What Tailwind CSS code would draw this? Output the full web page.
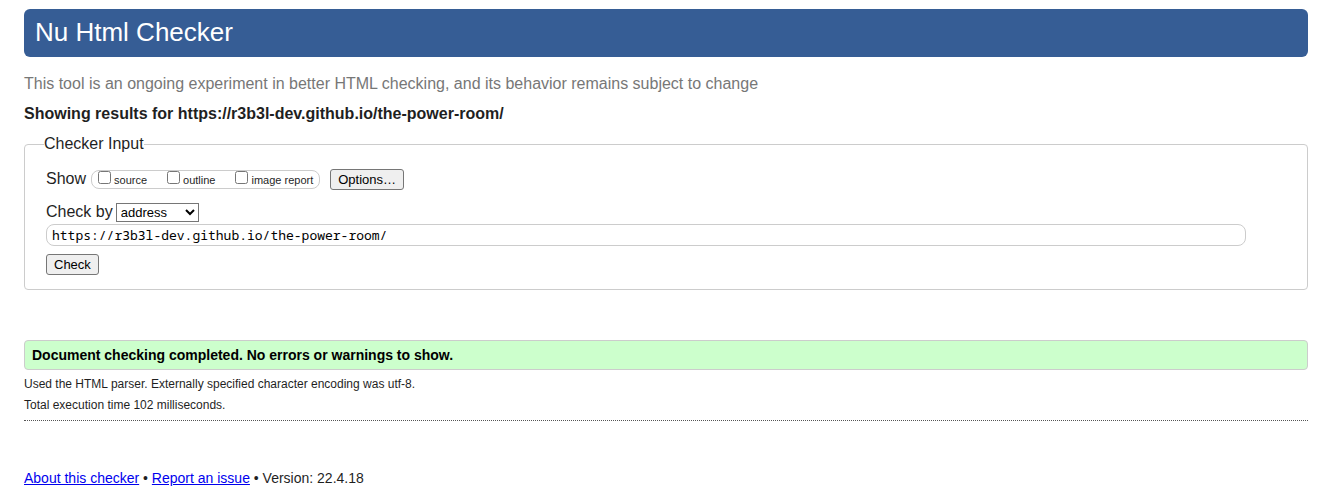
<!DOCTYPE html>
<html lang="en">
<head>
<meta charset="utf-8">
<meta name="viewport" content="width=device-width, initial-scale=1">
<title>Nu Html Checker</title>
<script src="https://cdn.jsdelivr.net/npm/@tailwindcss/browser@4"></script>
</head>
<body class="bg-white px-5 pt-[9px] pb-3 pl-6 font-['Liberation_Sans',Arial,sans-serif] text-base leading-5 text-[#1f1f1f]">
<header>
  <h1 class="rounded-md bg-[#365d95] px-[11px] pt-[5px] pb-[7px] text-[26px] leading-9 text-white">Nu Html Checker</h1>
</header>
<main>
  <p class="mt-[17px] text-[#777]">This tool is an ongoing experiment in better HTML checking, and its behavior remains subject to change</p>
  <h2 class="mt-2.5 font-bold">Showing results for https://r3b3l-dev.github.io/the-power-room/</h2>
  <form>
    <fieldset class="mt-2.5 rounded border border-[#ccc] px-[21px] pb-3.5">
      <legend class="-ml-0.5">Checker Input</legend>
      <div class="mt-[15px] flex h-[21px] items-center">
        <span class="pb-0.5">Show</span>
        <div class="ml-[5px] flex h-[19px] items-center rounded-lg border border-[#ccc] px-1.5 text-[11px] leading-4">
          <input id="source" type="checkbox" class="mb-1 size-[13px]"><label for="source" class="ml-[3px] pt-px">source</label>
          <input id="outline" type="checkbox" class="mb-1 ml-5 size-[13px]"><label for="outline" class="ml-[3px] pt-px">outline</label>
          <input id="image" type="checkbox" class="mb-1 ml-5 size-[13px]"><label for="image" class="ml-[3px] pt-px">image report</label>
        </div>
        <button type="button" class="ml-2.5 h-[21px] rounded-[3px] border border-[#767676] bg-[#efefef] px-[7px] text-[13px] leading-4 text-black">Options…</button>
      </div>
      <div class="mt-3 flex items-center">
        <label for="method">Check by</label>
        <select id="method" class="ml-[3px] h-[19px] w-[83px] border border-[#767676] bg-white text-[13px] leading-4 text-black"><option>address</option></select>
      </div>
      <input type="text" aria-label="Address" value="https://r3b3l-dev.github.io/the-power-room/" class="mt-0.5 block h-[22px] w-[calc(100%-40px)] rounded-lg border border-[#ccc] px-[5px] font-['Noto_Sans_Mono','DejaVu_Sans_Mono',monospace] text-[13px] leading-5 text-black">
      <button type="button" class="mt-2 block h-[21px] rounded-[3px] border border-[#767676] bg-[#efefef] px-[7px] text-[13px] leading-4 text-black">Check</button>
    </fieldset>
  </form>
  <section class="mt-[50px]">
    <p class="rounded border border-[#ccc] bg-[#cfc] px-[7px] py-1 text-sm font-bold text-black">Document checking completed. No errors or warnings to show.</p>
    <p class="mt-1 text-[12px] leading-5">Used the HTML parser. Externally specified character encoding was utf-8.</p>
    <p class="mt-px text-[12px] leading-5">Total execution time 102 milliseconds.</p>
  </section>
</main>
<footer class="mt-[5px] border-t border-dotted border-[#555] pt-[47px] text-sm">
  <p><a href="#about" class="text-[#0000ee] underline">About this checker</a> • <a href="#issues" class="text-[#0000ee] underline">Report an issue</a> • Version: 22.4.18</p>
</footer>
</body>
</html>
